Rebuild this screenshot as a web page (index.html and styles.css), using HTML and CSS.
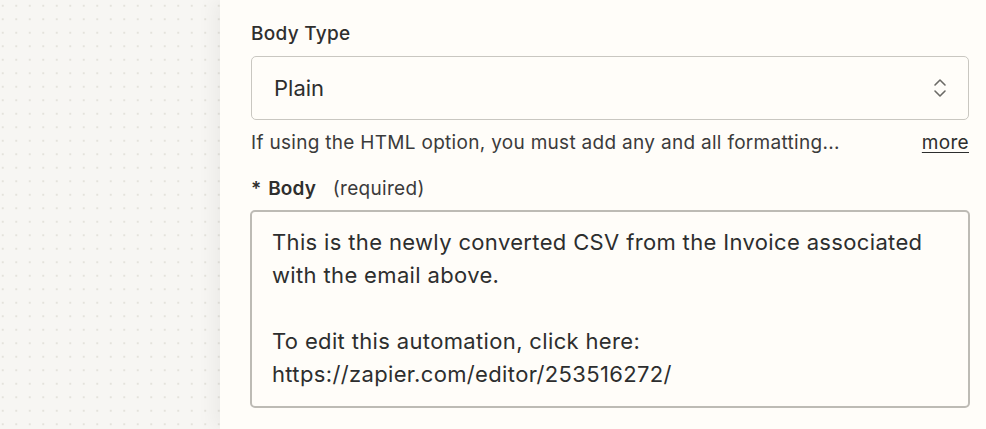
FILE: index.html
```html
<!DOCTYPE html>
<html lang="en">
<head>
  <meta charset="UTF-8" />
  <meta name="viewport" content="width=device-width, initial-scale=1.0" />
  <title>Email - Body</title>
  <link rel="stylesheet" href="styles.css">
</head>
<body>
  <div class="canvas"></div>
  <div class="panel">
    <div class="field">
      <label class="label">Body Type</label>
      <div class="select">
        <span class="select-value">Plain</span>
        <svg class="select-icon" width="14" height="22" viewBox="0 0 14 22">
          <path d="M2 8 L7 3 L12 8" fill="none" stroke="#6b6a66" stroke-width="1.6" stroke-linecap="round" stroke-linejoin="round"/>
          <path d="M2 14 L7 19 L12 14" fill="none" stroke="#6b6a66" stroke-width="1.6" stroke-linecap="round" stroke-linejoin="round"/>
        </svg>
      </div>
      <div class="help">
        <span>If using the HTML option, you must add any and all formatting...</span>
        <a class="more" href="#">more</a>
      </div>
    </div>
    <div class="field field-body">
      <label class="label"><span class="req">*</span> Body <span class="optional">(required)</span></label>
      <div class="textarea">This is the newly converted CSV from the Invoice associated with the email above.

To edit this automation, click here:
https://zapier.com/editor/253516272/</div>
    </div>
  </div>
</body>
</html>
```

FILE: styles.css
```css
html, body {
  margin: 0;
  padding: 0;
  height: 100%;
  overflow: hidden;
}
body {
  display: flex;
  font-family: Inter, "Noto Sans", sans-serif;
  color: #2d2e2e;
  background: #f7f6f3;
}
.canvas {
  width: 220px;
  flex-shrink: 0;
  background-color: #f7f6f3;
  background-image: radial-gradient(circle, #e4e2dc 1px, transparent 1.3px);
  background-size: 13.5px 13.5px;
  background-position: -4px -1px;
}
.panel {
  flex: 1;
  background: #fffdf9;
  padding: 22px 17px 0 31px;
  box-shadow: -6px 0 18px rgba(0, 0, 0, 0.05);
  position: relative;
}
.field {
  display: flex;
  flex-direction: column;
}
.label {
  font-size: 19px;
  font-weight: 500;
  letter-spacing: 0.3px;
  line-height: 24px;
  margin-bottom: 10px;
  color: #2f2f2e;
}
.field-body .label {
  font-weight: 600;
  letter-spacing: 0.1px;
  margin-bottom: 9px;
}
.req {
  margin-right: 2px;
}
.optional {
  font-weight: 400;
  letter-spacing: 0.3px;
  margin-left: 12px;
  color: #3b3b3b;
}
.select {
  height: 62px;
  border: 1px solid #c9c7c1;
  border-radius: 5px;
  display: flex;
  align-items: center;
  justify-content: space-between;
  padding: 0 21px 0 22px;
  font-size: 22px;
}
.select-icon {
  display: block;
}
.help {
  display: flex;
  justify-content: space-between;
  align-items: center;
  font-size: 19px;
  letter-spacing: 0.3px;
  line-height: 24px;
  margin-top: 11px;
  margin-bottom: 22px;
  color: #3b3b3b;
}
.more {
  color: #2d2e2e;
  text-decoration: underline;
  text-underline-offset: 3px;
}
.textarea {
  margin-left: -1px;
  margin-right: -1px;
  height: 166px;
  border: 2px solid #bdbbb5;
  border-radius: 5px;
  padding: 14px 20px;
  font-size: 22px;
  letter-spacing: 0.35px;
  line-height: 33px;
  white-space: pre-line;
  color: #2d2e2e;
}
```
